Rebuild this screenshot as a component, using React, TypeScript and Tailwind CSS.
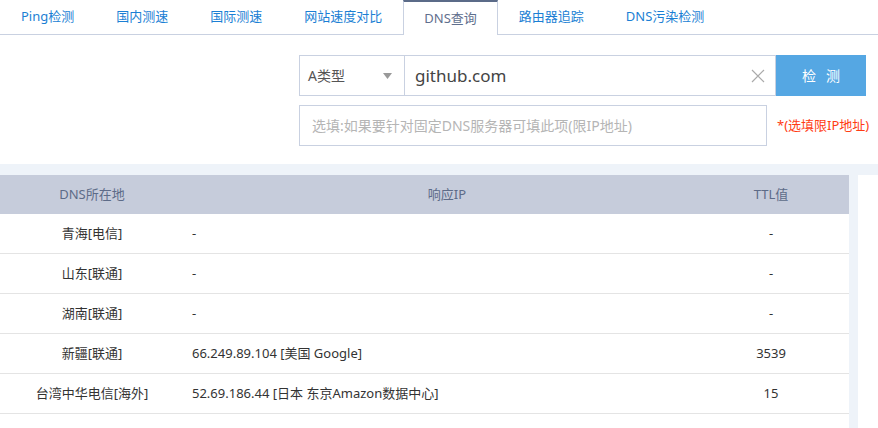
import React from 'react';

const tabs = ['Ping检测', '国内测速', '国际测速', '网站速度对比', 'DNS查询', '路由器追踪', 'DNS污染检测'];

const rows = [
  { loc: '青海[电信]', ip: '-', ttl: '-' },
  { loc: '山东[联通]', ip: '-', ttl: '-' },
  { loc: '湖南[联通]', ip: '-', ttl: '-' },
  { loc: '新疆[联通]', ip: '66.249.89.104 [美国 Google]', ttl: '3539' },
  { loc: '台湾中华电信[海外]', ip: '52.69.186.44 [日本 东京Amazon数据中心]', ttl: '15' },
];

const App: React.FC = () => {
  return (
    <div className="w-[878px] h-[428px] overflow-hidden bg-[#eef3f9] text-[13px]" style={{ fontFamily: '"Noto Sans", "Noto Sans CJK SC", sans-serif' }}>
      {/* tabs + form */}
      <div className="bg-white h-[164px]">
        <div className="flex h-[35px] border-b border-[#c9d1e1]">
          {tabs.map(t => t === 'DNS查询' ? (
            <div key={t} className="px-[20px] h-[35px] -mb-px flex items-center bg-white border-x border-[#c9d1e1] border-t-2 border-t-[#5b6b88] text-[#5f6f8e]">{t}</div>
          ) : (
            <div key={t} className="px-[21px] flex items-center text-[#1b7fd4]">{t}</div>
          ))}
        </div>

        <div className="pl-[299px] pt-[20px]">
          <div className="flex h-[41px]">
            <div className="w-[106px] flex items-center justify-between pl-[8px] pr-[12px] border border-[#c9d1e1] text-[#555]">
              <span className="text-[14px]">A类型</span>
              <svg width="9" height="6" viewBox="0 0 9 6"><path d="M0 0h9L4.5 6z" fill="#999" /></svg>
            </div>
            <div className="w-[371px] flex items-center justify-between border-y border-r border-[#c9d1e1] pl-[10px] pr-[10px]">
              <span className="text-[17px] text-[#444]">github.com</span>
              <svg width="14" height="14" viewBox="0 0 14 14"><path d="M1 1l12 12M13 1L1 13" stroke="#aaa" strokeWidth="1.2" /></svg>
            </div>
            <div className="w-[90px] bg-[#55a7e3] text-white text-[14px] flex items-center justify-center tracking-[10px] pl-[10px]">检测</div>
          </div>
          <div className="flex items-center mt-[9px]">
            <div className="w-[468px] h-[41px] border border-[#c9d1e1] flex items-center pl-[12px] text-[#b5b5b5] text-[14px]">选填:如果要针对固定DNS服务器可填此项(限IP地址)</div>
            <span className="ml-[10px] text-[#ff3c14] text-[13px]">*(选填限IP地址)</span>
          </div>
        </div>
      </div>

      {/* table + side */}
      <div className="flex gap-[9px] mt-[11px]">
        <div className="w-[849px] shrink-0 bg-white">
          <div className="grid grid-cols-[184px_526px_122px_1fr] h-[39px] items-center bg-[#c6ccdb] text-[#5d6b88]">
            <div className="text-center">DNS所在地</div>
            <div className="text-center">响应IP</div>
            <div className="text-center">TTL值</div>
            <div />
          </div>
          {rows.map(r => (
            <div key={r.loc} className="grid grid-cols-[184px_526px_122px_1fr] h-[40px] items-center border-b border-[#e4e4e4] text-[#333]">
              <div className="text-center">{r.loc}</div>
              <div className="pl-[8px]">{r.ip}</div>
              <div className="text-center">{r.ttl}</div>
              <div />
            </div>
          ))}
        </div>
        <div className="w-[200px] shrink-0 h-[300px] bg-white" />
      </div>
    </div>
  );
};

export default App;
